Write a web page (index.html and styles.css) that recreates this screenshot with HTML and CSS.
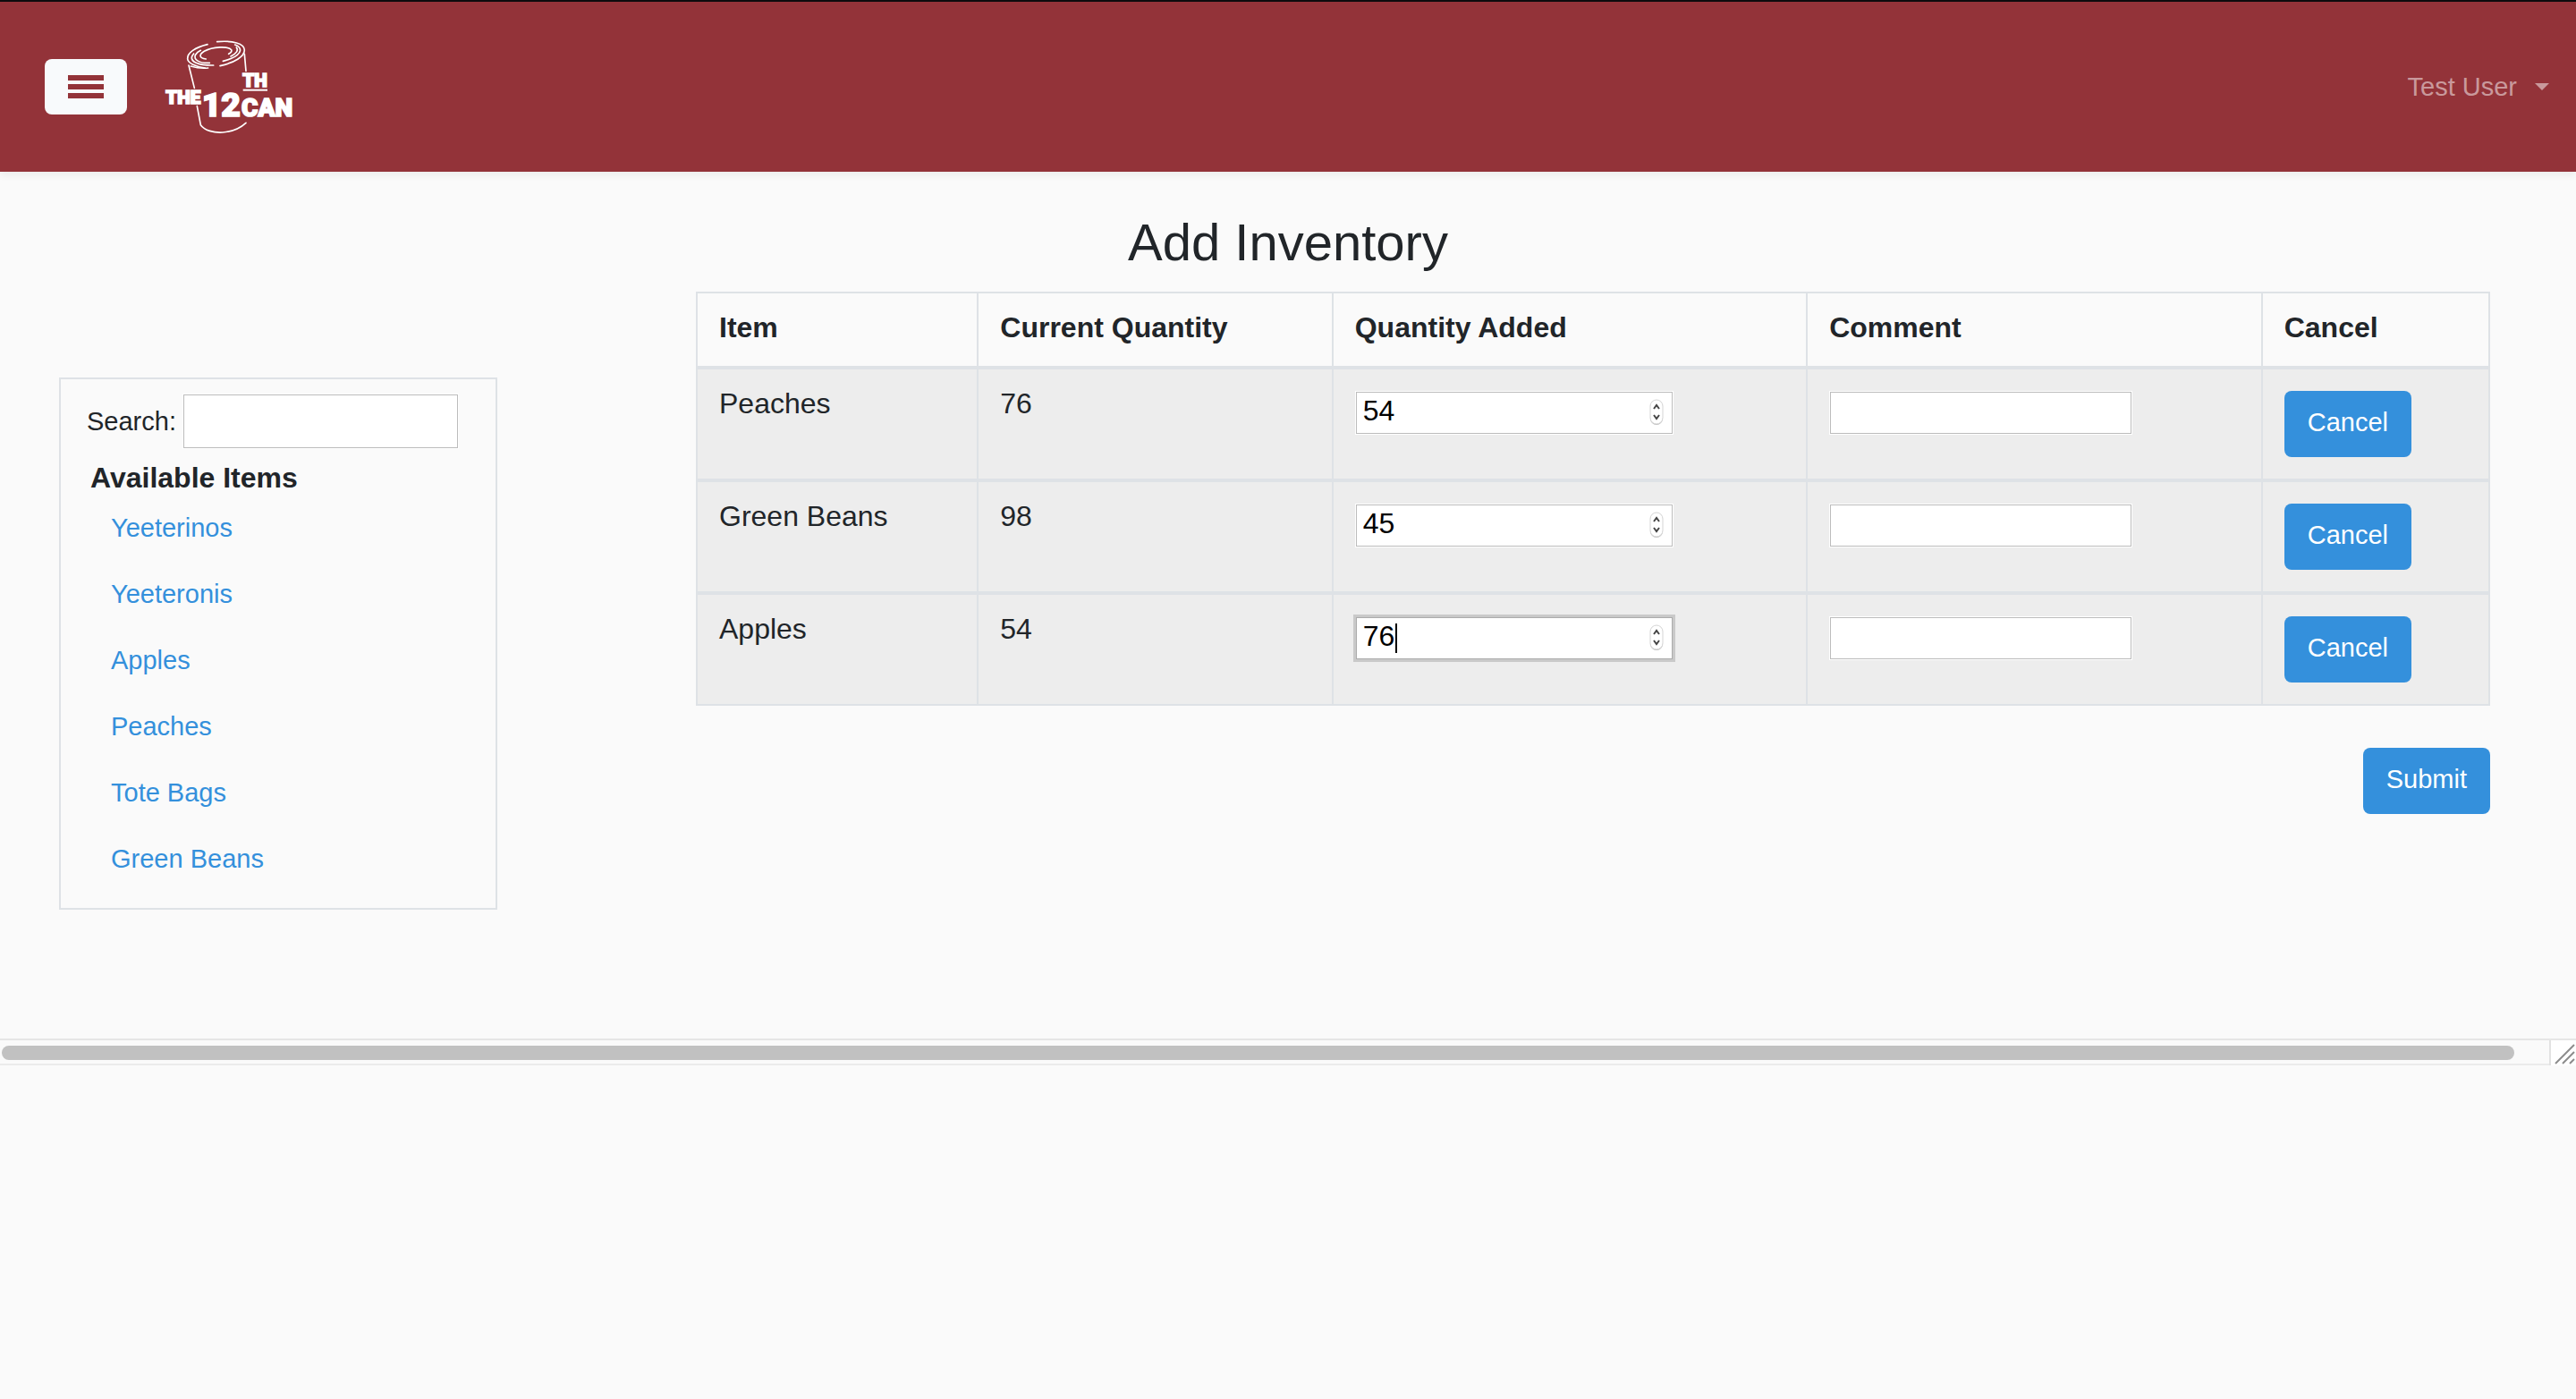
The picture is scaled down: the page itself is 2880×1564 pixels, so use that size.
FILE: index.html
```html
<!DOCTYPE html>
<html lang="en">
<head>
<meta charset="utf-8">
<meta name="viewport" content="width=device-width, initial-scale=1">
<title>Add Inventory</title>
<link rel="stylesheet" href="styles.css">
</head>
<body>
<svg class="defs" aria-hidden="true">
  <symbol id="stepper" viewBox="0 0 16 30">
    <rect x="1" y="2" width="14" height="27" rx="7" fill="#bbb"/>
    <rect x="1" y="1" width="14" height="27" rx="7" fill="#fff" stroke="#d4d4d4"/>
    <path d="M5 11l3-4 3 4M5 18l3 4 3-4" fill="none" stroke="#444" stroke-width="2"/>
  </symbol>
</svg>
<header class="navbar">
  <button class="menu-toggle" type="button" aria-label="Menu"><span></span><span></span><span></span></button>
  <a class="brand" href="#" aria-label="The 12th Can">
    <svg class="logo" viewBox="45 45 435 315">
      <g fill="none" stroke="#fff" stroke-width="5" stroke-linecap="round">
        <path d="M186 59C145 69 118 87 119 107C120 122 148 134 178 138"/>
        <path d="M218 50C270 45 310 56 310 78C310 100 276 120 228 131"/>
        <path d="M206 129C155 130 131 117 133 102Q135 95 140 90"/>
        <path d="M193 121C158 123 139 110 145 95Q150 85 163 79"/>
        <path d="M181 108C157 105 157 93 175 82C203 66 255 64 266 77Q269 85 257 91"/>
        <path d="M278 60C304 70 302 90 266 106Q255 111 238 115"/>
        <path d="M283 69Q294 83 264 99"/>
        <path d="M123 129L142 205M130 132Q160 141 188 138M151 266L163 329C176 347 207 356 237 354Q285 350 315 322"/>
        <path d="M310 91L315 148"/>
      </g>
      <g class="logo-text">
        <text class="word" x="46" y="258">THE</text>
        <text class="number" x="167" y="300">12</text>
        <text class="word" x="304" y="200">TH</text>
        <text class="can" x="300" y="300">CAN</text>
      </g>
      <path d="M305 212H387" stroke="#fff" stroke-width="6"/>
    </svg>
  </a>
  <button class="user-menu" type="button">Test User<span class="caret"></span></button>
</header>
<main class="page">
  <h1>Add Inventory</h1>
  <div class="columns">
    <aside class="items">
      <div class="search">
        <label for="search">Search:</label>
        <input class="field" id="search" type="text">
      </div>
      <h2>Available Items</h2>
      <ul>
        <li><a href="#">Yeeterinos</a></li>
        <li><a href="#">Yeeteronis</a></li>
        <li><a href="#">Apples</a></li>
        <li><a href="#">Peaches</a></li>
        <li><a href="#">Tote Bags</a></li>
        <li><a href="#">Green Beans</a></li>
      </ul>
    </aside>
    <form class="inventory">
      <table>
        <colgroup><col class="c-item"><col class="c-current"><col class="c-added"><col class="c-comment"><col></colgroup>
        <thead>
          <tr><th scope="col">Item</th><th scope="col">Current Quantity</th><th scope="col">Quantity Added</th><th scope="col">Comment</th><th scope="col">Cancel</th></tr>
        </thead>
        <tbody>
          <tr>
            <td>Peaches</td><td>76</td>
            <td><div class="quantity"><input class="field" type="number" value="54" aria-label="Quantity of Peaches added"><svg class="stepper"><use href="#stepper"/></svg></div></td>
            <td><input class="field comment" type="text" aria-label="Comment on Peaches"></td>
            <td><button class="btn" type="button">Cancel</button></td>
          </tr>
          <tr>
            <td>Green Beans</td><td>98</td>
            <td><div class="quantity"><input class="field" type="number" value="45" aria-label="Quantity of Green Beans added"><svg class="stepper"><use href="#stepper"/></svg></div></td>
            <td><input class="field comment" type="text" aria-label="Comment on Green Beans"></td>
            <td><button class="btn" type="button">Cancel</button></td>
          </tr>
          <tr>
            <td>Apples</td><td>54</td>
            <td><div class="quantity active"><input class="field" type="number" value="76" aria-label="Quantity of Apples added"><span class="cursor"></span><svg class="stepper"><use href="#stepper"/></svg></div></td>
            <td><input class="field comment" type="text" aria-label="Comment on Apples"></td>
            <td><button class="btn" type="button">Cancel</button></td>
          </tr>
        </tbody>
      </table>
      <button class="btn submit" type="button">Submit</button>
    </form>
  </div>
</main>
<div class="scrollbar">
  <div class="track"><div class="thumb"></div></div>
  <svg class="grip" viewBox="0 0 28 28"><path d="M5 26L26 5M13 26L26 13M21 26L26 21" stroke="#8c8c8c" stroke-width="2"/></svg>
</div>
</body>
</html>
```
FILE: styles.css
```css
* { box-sizing: border-box; }

body {
  margin: 0;
  background: #fafafa;
  color: #212529;
  font: 29px/46px "Liberation Sans", Arial, sans-serif;
}

button, input { font: inherit; }
h1, h2, ul { margin: 0; padding: 0; }
.defs { display: none; }

.navbar {
  display: flex;
  align-items: center;
  gap: 43px;
  height: 192px;
  padding: 0 30px 0 50px;
  border-top: 2px solid #0d0b0d;
  background: #933339;
  box-shadow: 0 4px 8px rgba(0, 0, 0, .06);
}

.menu-toggle {
  display: flex;
  flex-direction: column;
  align-items: center;
  justify-content: center;
  gap: 4px;
  width: 92px;
  height: 62px;
  padding: 0;
  border: 0;
  border-radius: 8px;
  background: #f8fafc;
}
.menu-toggle span { width: 40px; height: 6px; background: #933339; }

.brand { display: flex; }
.logo { width: 145px; height: 105px; overflow: visible; }
.logo-text {
  fill: #fff;
  stroke: #fff;
  stroke-width: 5px;
  font-family: Roboto, "Liberation Sans", sans-serif;
  font-weight: 900;
}
.word { font-size: 62px; }
.can { font-size: 84px; }
.number { font-size: 112px; }

.user-menu {
  display: flex;
  align-items: center;
  gap: 20px;
  margin-left: auto;
  padding: 0;
  border: 0;
  background: none;
  color: #c9999c;
}
.caret { border: 8px solid transparent; border-top-color: #c9999c; border-bottom: 0; }

.page { padding: 44px 96px 144px 66px; }
h1 {
  margin-bottom: 20px;
  padding-left: 30px;
  font-size: 58px;
  font-weight: 400;
  line-height: 70px;
  text-align: center;
}

.columns { display: flex; align-items: flex-start; gap: 222px; }

.items {
  flex: 0 0 490px;
  min-width: 0;
  margin-top: 96px;
  padding: 17px 42px 32px 29px;
  border: 2px solid #dee2e6;
}
.search { display: flex; align-items: center; gap: 8px; }
.search .field { flex: 1; width: 0; min-width: 0; height: 60px; }
h2 { margin: 15px 0 15px 4px; font-size: 32px; line-height: 36px; }
.items ul { display: grid; gap: 28px; padding-left: 27px; list-style: none; }
.items a { color: #3490dc; text-decoration: none; }
.items li { height: 46px; }

.field {
  border: 1px solid #bcbcbc;
  border-radius: 0;
  outline: 1px solid #fff;
  outline-offset: 0;
  background: #fff;
  color: #000;
}

.inventory { display: flex; flex: 1; flex-direction: column; min-width: 0; }
table {
  width: 100%;
  border: 2px solid #dee2e6;
  border-spacing: 0;
  font-size: 32px;
  line-height: 36px;
  table-layout: fixed;
}
.c-item { width: 15.6%; }
.c-current { width: 19.8%; }
.c-added { width: 26.5%; }
.c-comment { width: 25.4%; }
th, td {
  padding: 20px 24px 24px;
  border-left: 2px solid #dee2e6;
  text-align: left;
  vertical-align: top;
}
th { padding-bottom: 25px; }
th:first-child, td:first-child { border-left: 0; }
td { border-top: 4px solid #dee2e6; background: #ededed; }

.quantity { position: relative; width: 354px; margin: 5px 1px 0; }
.quantity .field {
  display: block;
  width: 100%;
  height: 47px;
  padding: 0 7px 4px;
  appearance: textfield;
}
.quantity .field::-webkit-inner-spin-button { display: none; }
.quantity.active .field { border-color: #acacac; outline: 3px solid #c9c9c9; }
.stepper { position: absolute; top: 8px; right: 10px; width: 16px; height: 30px; }
.cursor { position: absolute; top: 7px; left: 44px; width: 2px; height: 33px; background: #000; }
.comment { display: block; width: 337px; height: 47px; margin: 5px 1px 0; }

.btn {
  display: block;
  margin-top: 4px;
  padding: 12px 26px 16px;
  border: 0;
  border-radius: 8px;
  background: #3490dc;
  color: #fff;
  font-size: 29px;
  line-height: 46px;
}
.submit { align-self: flex-end; margin-top: 47px; }

.scrollbar { display: flex; height: 30px; border-top: 2px solid #e6e6e6; }
.track { flex: 1; padding: 6px 39px 4px 2px; border-bottom: 2px solid #ebebeb; }
.thumb { height: 16px; border-radius: 8px; background: #c1c1c1; }
.grip { width: 30px; height: 28px; border-left: 2px solid #e2e2e2; background: #fff; }
```
